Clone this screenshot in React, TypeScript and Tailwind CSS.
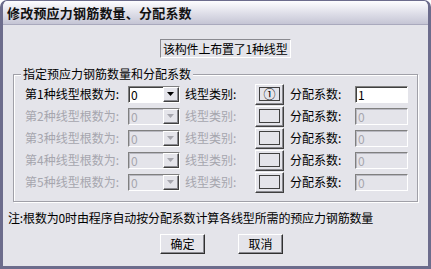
import React from "react";

const font = { fontFamily: '"Noto Sans CJK SC", "Noto Sans", sans-serif' };

function Arrow({ disabled }: { disabled?: boolean }) {
  return (
    <div className="w-[16px] h-[15px] bg-[#e4e4ea] border border-t-white border-l-white border-r-[#404040] border-b-[#404040] shadow-[inset_-1px_-1px_0_#8a8a90] flex items-center justify-center">
      <svg width="8" height="5" viewBox="0 0 8 5">
        <path d="M0 0 H7 L3.5 4 Z" fill={disabled ? "#a6a6ae" : "#000"} />
      </svg>
    </div>
  );
}

function Row({ n, enabled }: { n: number; enabled: boolean }) {
  const dim = enabled ? "text-black" : "text-[#a6a6ae]";
  return (
    <div className="h-[22px] flex items-center">
      <div className={`w-[103px] text-[12px] leading-[14px] whitespace-nowrap ${dim}`}>第{n}种线型根数为:</div>
      <div
        className={`w-[52px] h-[17px] flex items-center justify-between border border-t-[#808080] border-l-[#808080] border-r-white border-b-white ${
          enabled ? "bg-white shadow-[inset_1px_1px_0_#404040]" : "bg-[#e4e4ea] shadow-[inset_1px_1px_0_#b8b8c0]"
        }`}
      >
        <span className={`pl-[2px] text-[12px] leading-[13px] ${dim}`}>0</span>
        <Arrow disabled={!enabled} />
      </div>
      <div className={`ml-[5px] w-[70px] text-[12px] leading-[14px] whitespace-nowrap ${dim}`}>线型类别:</div>
      <div className="w-[29px] h-[21px] bg-[#e4e4ea] border border-t-white border-l-white border-r-[#404040] border-b-[#404040] shadow-[inset_-1px_-1px_0_#8a8a90] flex items-center justify-center">
        <div className="w-[21px] h-[14px] border border-[#404040] flex items-center justify-center text-[12px] leading-[12px] text-black">
          {enabled ? "①" : ""}
        </div>
      </div>
      <div className="ml-[6px] w-[65px] text-[12px] leading-[14px] whitespace-nowrap text-black">分配系数:</div>
      <div
        className={`w-[53px] h-[17px] flex items-center border border-t-[#808080] border-l-[#808080] border-r-white border-b-white ${
          enabled ? "bg-white shadow-[inset_1px_1px_0_#404040]" : "bg-[#e4e4ea] shadow-[inset_1px_1px_0_#b8b8c0]"
        }`}
      >
        <span className={`pl-[2px] text-[12px] leading-[13px] ${dim}`}>{enabled ? "1" : "0"}</span>
      </div>
    </div>
  );
}

function Btn({ label }: { label: string }) {
  return (
    <div className="w-[45px] h-[20px] bg-[#e4e4ea] border border-t-white border-l-white border-r-[#303030] border-b-[#303030] shadow-[inset_-1px_-1px_0_#8a8a90] flex items-center justify-center text-[12px] leading-[14px] text-black">
      {label}
    </div>
  );
}

export default function App() {
  return (
    <div style={font} className="w-[431px] h-[269px] bg-[#e4e4ea] border-x-[3px] border-b-[3px] border-t border-[#6c6c8c] rounded-t-[7px] flex flex-col overflow-hidden">
      <div className="h-[24px] shrink-0 bg-gradient-to-b from-[#fdfdff] to-[#c5c5d5] border-b border-[#a9a9bd] flex items-center pl-[4px]">
        <span className="text-[13px] font-bold tracking-[0.2px] text-[#111] whitespace-nowrap">修改预应力钢筋数量、分配系数</span>
      </div>
      <div className="flex flex-col">
        <div className="mt-[14px] ml-[157px] w-[131px] h-[19px] border border-t-[#8a8a90] border-l-[#8a8a90] border-r-white border-b-white flex items-center pl-[2px] text-[12px] leading-[14px] text-black whitespace-nowrap tracking-[-0.2px]">
          该构件上布置了1种线型
        </div>
        <div className="relative mt-[16px] ml-[10px] w-[405px] border border-[#a0a0a8] shadow-[inset_1px_1px_0_#fff,1px_1px_0_#fff] pt-[8px] pb-[8px] pl-[11px]">
          <span className="absolute -top-[8px] left-[7px] px-[2px] bg-[#e4e4ea] text-[12px] leading-[14px] text-black whitespace-nowrap">
            指定预应力钢筋数量和分配系数
          </span>
          <Row n={1} enabled />
          <Row n={2} enabled={false} />
          <Row n={3} enabled={false} />
          <Row n={4} enabled={false} />
          <Row n={5} enabled={false} />
        </div>
        <div className="mt-[9px] ml-[5px] text-[12px] leading-[14px] text-black tracking-[-0.15px] whitespace-nowrap">
          注:根数为0时由程序自动按分配系数计算各线型所需的预应力钢筋数量
        </div>
        <div className="mt-[9px] flex">
          <div className="ml-[157px]">
            <Btn label="确定" />
          </div>
          <div className="ml-[33px]">
            <Btn label="取消" />
          </div>
        </div>
      </div>
    </div>
  );
}
